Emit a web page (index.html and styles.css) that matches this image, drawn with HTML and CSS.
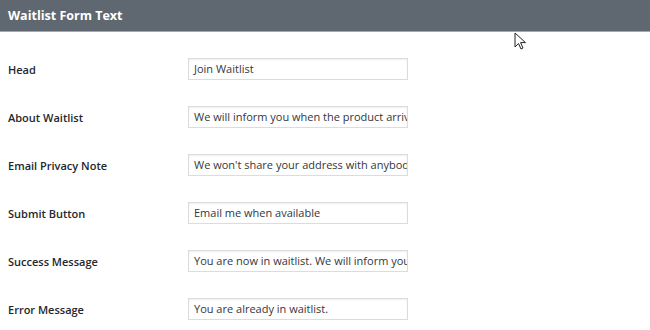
FILE: index.html
```html
<!DOCTYPE html>
<html>
<head>
<meta charset="utf-8">
<link rel="stylesheet" href="styles.css">
</head>
<body>
<div class="header">Waitlist Form Text</div>
<div class="form">
  <div class="row"><div class="label">Head</div><div class="field">Join Waitlist</div></div>
  <div class="row"><div class="label">About Waitlist</div><div class="field">We will inform you when the product arrives in stock.</div></div>
  <div class="row"><div class="label">Email Privacy Note</div><div class="field">We won't share your address with anybody else.</div></div>
  <div class="row"><div class="label">Submit Button</div><div class="field">Email me when available</div></div>
  <div class="row"><div class="label">Success Message</div><div class="field">You are now in waitlist. We will inform you as soon as we are back in stock.</div></div>
  <div class="row"><div class="label">Error Message</div><div class="field">You are already in waitlist.</div></div>
</div>
<svg class="cursor" width="14" height="20" viewBox="0 0 14 20"><path d="M1 1 L1 15 L4.5 11.5 L7 17 L9 16 L6.6 10.6 L11.5 10.6 Z" fill="#fff" stroke="#222" stroke-width="1" stroke-linejoin="round"/></svg>
</body>
</html>
```
FILE: styles.css
```css
html, body {
  margin: 0;
  padding: 0;
  background: #fff;
  font-family: "Open Sans", "Noto Sans", sans-serif;
  overflow: hidden;
}
.header {
  height: 32px;
  box-sizing: border-box;
  background: #5f6871;
  border-bottom: 1px solid #a3a8ad;
  color: #fff;
  font-weight: 700;
  font-size: 12.5px;
  line-height: 31px;
  padding-left: 8px;
}
.form {
  padding: 13px 0 0 8px;
}
.row {
  display: grid;
  grid-template-columns: 180px 220px;
  height: 48px;
  align-items: center;
}
.label {
  font-size: 11px;
  font-weight: 600;
  color: #23282d;
}
.field {
  box-sizing: border-box;
  height: 22px;
  border: 1px solid #dcdcdc;
  box-shadow: inset 0 1px 2px rgba(0,0,0,0.07);
  font-size: 11px;
  line-height: 20px;
  padding: 0 5px;
  color: #32373c;
  white-space: nowrap;
  overflow: hidden;
}
.cursor {
  position: absolute;
  left: 514px;
  top: 32px;
}
```
